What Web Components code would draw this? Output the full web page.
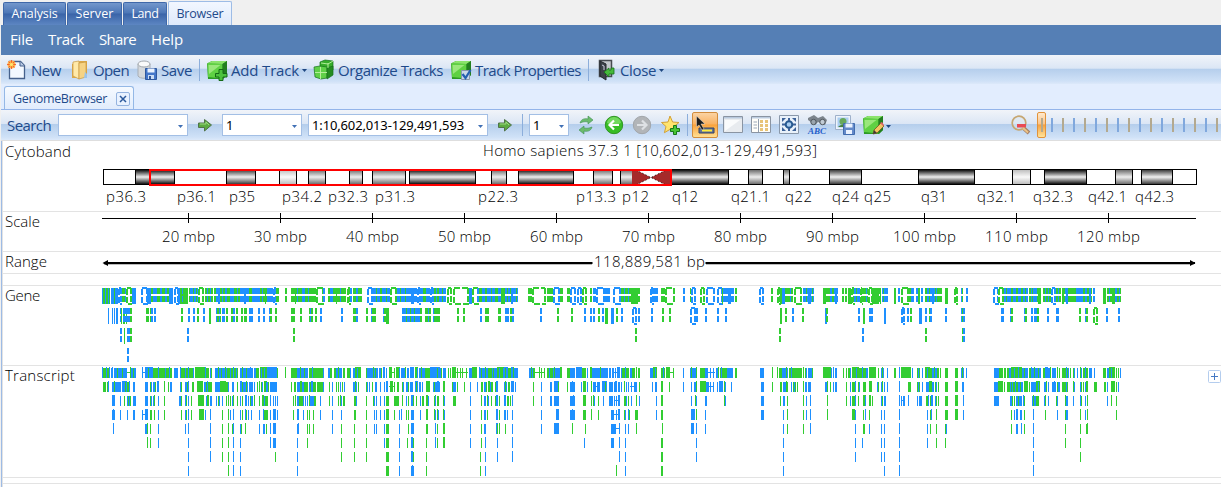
<!DOCTYPE html>
<html lang="en">
<head>
<meta charset="utf-8">
<title>Genome Browser</title>
<style>
html,body{margin:0;height:100%;overflow:hidden;background:#f0f0f0}
body{font:15px "Open Sans","Noto Sans",sans-serif;color:#1e4a8a}
</style>
</head>
<body>
<genome-app></genome-app>
<script>
const define=(name,cls)=>customElements.define(name,cls);
const shadow=(el,html)=>{const r=el.attachShadow({mode:'open'});const t=document.createElement('template');t.innerHTML=html;r.append(t.content.cloneNode(true));return r;};

/* Text tracked out to a fixed width */
class FitText extends HTMLElement{
  connectedCallback(){
    if(this.shadowRoot)return;
    const r=shadow(this,`<style>:host{display:block;flex:none;white-space:pre}span{display:inline-block}</style><span><slot></slot></span>`);
    const w=+this.getAttribute('w'),s=r.querySelector('span');
    this.style.width=w+'px';
    if(this.hasAttribute('gap'))this.style.marginLeft=this.getAttribute('gap')+'px';
    const n=this.textContent.length;
    s.style.letterSpacing=((w-s.getBoundingClientRect().width)/n)+'px';
  }
}
define('fit-text',FitText);

const GLYPHS={
 new:`<path d="M2.500 1.500h11l4 4v13h-15z" fill="#f3f8ff" stroke="#46618c" stroke-width="1.300"/><path d="M13 1.500v4.500h4.500" fill="#b9cbe6" stroke="#46618c"/><circle cx="4.500" cy="4.500" r="4" fill="#ffb347"/><path d="M4.500 0v9M0 4.500h9M1.500 1.500l6 6M7.500 1.500l-6 6" stroke="#f4592d" stroke-width=".9"/><circle cx="4.500" cy="4.500" r="1.700" fill="#ffe66a"/>`,
 open:`<path d="M2 4l8-3h7v15l-8 2H2z" fill="#dca94a"/><path d="M3 2l6-1v18l-6-3z" fill="#ffe9a8" stroke="#c79a45" stroke-width=".7"/><path d="M9 3l7-1v15l-7 2z" fill="#f6d384" stroke="#c99a41" stroke-width=".7"/><path d="M15 12l2 2v4h-3z" fill="#9cc4ea"/>`,
 save:`<path d="M1 4v12c2 3 10 3 12 0V4" fill="#d4d8dc" stroke="#a8aeb5"/><ellipse cx="7" cy="4" rx="6" ry="3" fill="#fafafa" stroke="#a3a8ad"/><path d="M8.500 8.500h11v11h-11z" fill="#4376c9" stroke="#2e579d"/><path d="M10.500 8.500h7v4h-7z" fill="#e9f2ff"/><path d="M11 15h6v4h-6z" fill="#c9dcf5"/><path d="M12 16h2v3h-2z" fill="#32589b"/>`,
 cube:`<path d="M0 3.500L5 1h15v14l-4 4H1z" fill="#2c9a24"/><path d="M0 3.500L5 1h15l-4.500 3z" fill="#8be36b"/><path d="M.5 3.500L15.500 4v14.500L1 17z" fill="#5fd143"/><path d="M15.500 4L20 1v14l-4.500 4z" fill="#237f1f"/><path d="M1.500 5h12L2 14z" fill="#a9ec8b" opacity=".8"/>`,
 add:`<use href="#c"/><path d="M12 9.500h4v4h4v3.500h-4v3.500h-4v-3.500H8.500v-3.500H12z" fill="#4cc23c" stroke="#146a16"/>`,
 organize:`<path d="M6 2l5-2 8 1v9l-5 3H6z" fill="#37ad2b" stroke="#14711a" stroke-width=".7"/><path d="M0 7l6-1 7 1v11l-6 1-6-2z" fill="#5fd048" stroke="#14711a" stroke-width=".7"/><path d="M13 8l6-2v9l-6 4z" fill="#248c21" stroke="#14711a" stroke-width=".7"/><path d="M6.500 7v12M1 12.500h12M14 3v5M7 3l7 1 5-3" stroke="#bdf2a5" stroke-width=".9" fill="none"/>`,
 props:`<use href="#c"/><path d="M10.500 10.500h8v9h-8z" fill="#c9d8e8" stroke="#8997ab"/><path d="M11.500 14l3 4 5-8" stroke="#2460b0" stroke-width="2.200" fill="none"/>`,
 close:`<path d="M2.500.5h12v16h-12z" fill="#c3c7cb" stroke="#474b50" stroke-width="1.500"/><path d="M3 1l6 3v16l-6-4z" fill="#3c4248" stroke="#24282c"/><path d="M5 5l2 1v4" stroke="#ccd" fill="none"/><path d="M17 8v6h-5v3l-5-5 5-4v2h2V8z" fill="#45b83b" stroke="#157218" stroke-width=".8"/>`,
 go:`<path d="M3.500 8h6V4.500l7 5.500-7 6V12.500h-6z" fill="#5dab42" stroke="#50724a" stroke-width="1"/><path d="M5 9h6V7l3 3" fill="none" stroke="#9bd980"/>`,
 refresh:`<path d="M4 8c1-4 5-5 8-4V1l5 4-5 4V7c-3-.5-5-.3-8 1zM16 12c-1 4-5 5-8 4v3l-5-4 5-4v2c3 .5 5 .3 8-1z" fill="#6cbb6c" stroke="#3c8e50" stroke-width=".6"/>`,
 back:`<circle cx="10" cy="10" r="8.700" fill="#38bd26" stroke="#319523"/><path d="M3 8a7 6 0 0 1 14 0c-5 2-9 2-14 0" fill="#8be475" opacity=".7"/><path d="M15 10H6M10 5.500L5.500 10l4.500 4.500" fill="none" stroke="#fff" stroke-width="2.200"/>`,
 fwd:`<circle cx="10" cy="10" r="8.700" fill="#b2b5b8" stroke="#a2a6aa"/><path d="M5 10h9M10 5.500l4.500 4.500-4.500 4.500" fill="none" stroke="#dee1e4" stroke-width="2.200"/>`,
 star:`<path d="M9 1l2.600 6 6.400.5-5 4 1.600 6.200L9 14.400l-5.600 3.300L5 11.500l-4.500-4L7 7z" fill="#ffe46e" stroke="#d3a137"/><path d="M12.500 10.500h3v3h3v3h-3v3h-3v-3h-3v-3h3z" fill="#48c634" stroke="#157719"/>`,
 select:`<path d="M4 13v5h15v-5z" fill="#62739a" stroke="#324265"/><path d="M7 14.500h10v2H7z" fill="#ffed3e"/><path d="M1.500 1v11l2.500-2 3 5 2-1-3-5h4z" fill="#1d1d1d" stroke="#ece5db" stroke-width=".5"/>`,
 window:`<path d="M.5 1.500h19v16H.5z" fill="#e8ebef" stroke="#8a94a2"/><path d="M1 2h18v1.500H1z" fill="#b8c8dd"/><path d="M2 16L17 5H2z" fill="#fafbfc"/>`,
 list:`<path d="M.5 1.500h19v16H.5z" fill="#fffefa" stroke="#8a94a2"/><path d="M1 2h18v1.500H1z" fill="#bccce0"/><path d="M7.500 4v13" stroke="#919eaf"/><path d="M2.500 7H6M2.500 10H6M2.500 13H6" stroke="#9aa7b9"/><path d="M9 5h3v3H9zm5 0h3v3h-3zM9 9h3v3H9zm5 0h3v3h-3zM9 13h3v3H9zm5 0h3v3h-3z" fill="#e8c476"/>`,
 fit:`<path d="M.5.500h19v18H.5z" fill="#e9f1fa" stroke="#8a98aa"/><path d="M3 3h4L3 7zm10 0h4v4zM3 12v4h4zm14 0v4h-4z" fill="#3d6298"/><circle cx="10" cy="9.500" r="3.300" fill="#a9cdf0" stroke="#285a90" stroke-width="2"/><path d="M10 3v3M10 13v3M3 9.500h3M14 9.500h3" stroke="#3d6298" stroke-width="2"/>`,
 find:`<path d="M1 3l6-3 4 3 5-2 4 4-2 5-7-3-3 3-7-5z" fill="#7c848c"/><circle cx="6.500" cy="7" r="2.700" fill="#9ba5ad" stroke="#4e565d"/><circle cx="15.500" cy="7" r="2.700" fill="#c2ccd5" stroke="#4e565d"/><text x="10" y="19" text-anchor="middle" font-family="Liberation Serif,serif" font-size="9" font-style="italic" font-weight="bold" fill="#2560cb">ABC</text>`,
 picture:`<path d="M.5.500h15v14H.5z" fill="#eef4fb" stroke="#9eb0ca"/><path d="M2.500 2.500h11v10h-11z" fill="#a9cdf0"/><circle cx="8" cy="6.500" r="3.500" fill="#68a95c"/><path d="M3 12c3-3 7-3 10 0z" fill="#45823c"/><path d="M8.500 8.500h11v11h-11z" fill="#6389c9" stroke="#416cae"/><path d="M10.500 8.500h7v4h-7zM11 15h6v4h-6z" fill="#eaf2ff"/>`,
 edit:`<use href="#c"/><path d="M10 19l1-4 7-7 3 3-7 7z" fill="#f2c562" stroke="#74551f" stroke-width=".8"/><path d="M10 19l1-4 3 3z" fill="#403b35"/><path d="M17 8l2-1 2 3-1 1z" fill="#df6666"/>`,
 zoomout:`<circle cx="8" cy="8" r="6.800" fill="#dce7f0" fill-opacity=".55" stroke="#c6a772" stroke-width="1.700"/><path d="M6 9h9v3.500H6z" fill="#e84b55"/><path d="M13 13.500l5 4.500" stroke="#a5826a" stroke-width="4"/><path d="M12 13l5 4.500" stroke="#edc386" stroke-width="2"/>`
};
class UiIcon extends HTMLElement{
  connectedCallback(){
    if(this.shadowRoot)return;
    const g=GLYPHS[this.getAttribute('name')].replace('<use href="#c"/>',GLYPHS.cube);
    shadow(this,`<style>:host{display:block;flex:none;width:20px;height:20px;margin-left:${this.getAttribute('gap')||0}px}svg{display:block;overflow:visible}</style><svg width="20" height="20" viewBox="0 0 20 20">${g}</svg>`);
  }
}
define('ui-icon',UiIcon);

class UiCaret extends HTMLElement{
  connectedCallback(){
    if(this.shadowRoot)return;
    shadow(this,`<style>:host{display:block;flex:none;width:5px;height:3px;margin-top:2px;margin-left:${this.getAttribute('gap')||0}px}svg{display:block}</style><svg width="5" height="3"><path d="M0 0h5L2.500 3z" fill="${this.getAttribute('tone')||'#1e4680'}"/></svg>`);
  }
}
define('ui-caret',UiCaret);

class UiRule extends HTMLElement{
  connectedCallback(){
    if(this.shadowRoot)return;
    shadow(this,`<style>:host{display:block;flex:none;width:1px;height:22px;background:#8caedb;margin-left:${this.getAttribute('gap')}px}</style>`);
  }
}
define('ui-rule',UiRule);

class UiCombo extends HTMLElement{
  connectedCallback(){
    if(this.shadowRoot)return;
    shadow(this,`<style>:host{box-sizing:border-box;display:flex;flex:none;align-items:center;justify-content:space-between;height:22px;width:${this.getAttribute('w')}px;margin-left:${this.getAttribute('gap')}px;padding:0 4px 0 3px;background:#fff;border:1px solid #a3bfe5;color:#000;font:13px "Noto Sans","Open Sans",sans-serif}</style><div><slot></slot></div><ui-caret tone="#4070b5"></ui-caret>`);
  }
}
define('ui-combo',UiCombo);

class TopTab extends HTMLElement{
  connectedCallback(){
    if(this.shadowRoot)return;
    shadow(this,`<style>:host{box-sizing:border-box;display:flex;justify-content:center;align-items:center;height:23px;width:${this.getAttribute('w')}px;margin-right:1px;border:1px solid #3f68a9;border-bottom:0;border-radius:2px 2px 0 0;background:linear-gradient(#7397cc,#4d77b7 45%,#3a64a8 50%,#5d86c2);color:#fff;font-size:12.500px;padding-bottom:1px}
    :host([active]){height:24px;border-color:#9dbce6;background:linear-gradient(#f2f7ff,#dfeafb);color:#1e4a8a}</style><slot></slot>`);
  }
}
define('top-tab',TopTab);

class ToolBar extends HTMLElement{
  constructor(){super();shadow(this,`<style>:host{box-sizing:border-box;display:flex;align-items:center;background:linear-gradient(#f1f4f9,#dbe6f5 46%,#b5ceec 48%,#cfe1f7 90%,#dce9fa)}</style><slot></slot>`);}
}
define('tool-bar',ToolBar);

class ZoomSlider extends HTMLElement{
  connectedCallback(){
    if(this.shadowRoot)return;
    let s='';for(let i=1;i<17;i++)s+=`<i class="${i%2?'b':''}"></i>`;
    shadow(this,`<style>:host{display:flex;align-items:center;flex:none;margin-left:6px;height:26px}
    b{box-sizing:border-box;display:flex;align-items:center;justify-content:center;width:9px;height:26px;border:1px solid #e2933a;border-radius:2px;background:linear-gradient(#ffe9cc,#fbc58a 45%,#f5a142 50%,#ffe39a);margin-right:5px}
    b i{margin:0}i{width:2px;height:14px;margin-right:9px;background:#b3a98f}i.b{background:#80a8dd}</style><b><i></i></b>${s}`);
  }
}
define('zoom-slider',ZoomSlider);

/* A track row: caption column and plot */
class TrackRow extends HTMLElement{
  connectedCallback(){
    if(this.shadowRoot)return;
    shadow(this,`<style>:host{box-sizing:border-box;display:flex;height:${this.getAttribute('h')}px;border-bottom:1px solid #e3e3e3;background:#fff;color:#000;position:relative;font-weight:350}
    .cap{width:98px;flex:none;padding-left:2px;box-sizing:border-box;line-height:${this.getAttribute('line')||18}px}::slotted(*){flex:none}</style>
    <div class="cap">${this.getAttribute('name')?`<fit-text w="${this.getAttribute('cw')}">${this.getAttribute('name')}</fit-text>`:''}</div><slot></slot>`);
  }
}
define('track-row',TrackRow);

const svgBox=(h,top,body)=>`<style>:host{display:block;width:1120px}svg{display:block}text{font:350 15px "Open Sans","Noto Sans",sans-serif;fill:#000}</style><svg width="1120" height="${h}" viewBox="101 ${top} 1120 ${h}">${body}</svg>`;
const label=(s,x,y,w)=>`<text x="${x}" y="${y}" textLength="${w}">${s}</text>`;

class CytobandPlot extends HTMLElement{
  constructor(){
    super();
    const grads=[['k','#000','#eee'],['d','#303030','#f0f0f0'],['m','#666','#eee'],['l','#bbb','#fafafa']];
    let s='<defs>'+grads.map(([i,a,b])=>`<linearGradient id="${i}" x2="0" y2="1"><stop stop-color="${a}"/><stop offset=".5" stop-color="${b}"/><stop offset="1" stop-color="${a}"/></linearGradient>`).join('')+'</defs>';
    s+='<rect x="103.500" y="169.500" width="1093" height="15" fill="#fff" stroke="#000"/>';
    const bands='k135-174 d226-255 l279-296 m308-325 m349-362 m372-405 k409-475 m491-506 k518-573 m593-612 m620-633 k670-728 m748-762 m783-789 d829-861 k918-974 l1012-1030 k1044-1086 m1115-1132 d1141-1172';
    for(const b of bands.split(' ')){const [x,e]=b.slice(1).split('-').map(Number);s+=`<rect x="${x+.5}" y="169.500" width="${e-x}" height="15" fill="url(#${b[0]})" stroke="#000"/>`;}
    s+='<rect x="632" y="170" width="38" height="15" fill="#fff"/><path d="M632 170h4L651 177.500 636 185h-4zM670 170h-4L651 177.500 666 185h4z" fill="#a52a2a"/><path d="M636 170L666 185M636 185L666 170" stroke="#000" stroke-dasharray="1.500 2" stroke-width=".7"/><rect x="150" y="170" width="521" height="15" fill="none" stroke="#f00" stroke-width="2"/>';
    s+=label('Homo sapiens 37.3 1 [10,602,013-129,491,593]',483,156,334);
    for(const [n,x,w] of [['p36.3',106,40],['p36.1',177,39],['p35',229,26],['p34.2',282,40],['p32.3',328,40],['p31.3',375,40],['p22.3',478,40],['p13.3',576,40],['p12',622,27],['q12',672,26],['q21.1',731,39],['q22',785,27],['q24',832,27],['q25',864,27],['q31',921,26],['q32.1',977,39],['q32.3',1033,40],['q42.1',1088,39],['q42.3',1135,39]])s+=label(n,x,202,w);
    shadow(this,svgBox(70,141,s));
  }
}
define('cytoband-plot',CytobandPlot);

class ScalePlot extends HTMLElement{
  constructor(){
    super();
    let s='<path d="M102 218.500H1196" stroke="#000"/>';
    for(let i=0;i<11;i++){const x=188+92*i,w=i<8?53:63;s+=`<path d="M${x+.5} 213V223" stroke="#000"/>`+label((20+10*i)+' mbp',x+.5-w/2,242,w);}
    shadow(this,svgBox(39,212,s));
  }
}
define('scale-plot',ScalePlot);

class RangePlot extends HTMLElement{
  constructor(){
    super();
    shadow(this,svgBox(21,252,'<path d="M104 264.500H592M706 264.500H1194" stroke="#bbb"/><path d="M104 263H592.500M705.500 263H1195" stroke="#000" stroke-width="2"/><path d="M102.500 263l5.500-3v6zM1195.500 263l-5.500-3v6z"/>'+label('118,889,581 bp',594,267,111)));
  }
}
define('range-plot',RangePlot);

/* Features are packed as tokens per row and per tile; coordinates are thirds of a pixel. */
const BLUE='#1e90ff',GREEN='#32cd32',TILES=[90,430,770];
const GENES=[
["G36-60 B36 B45 B54 B63-84 G72 q84-96 g96-108 b105 r108-126 B126-138 q153-175 B171-183 g183-240 b189-201 b210-216 b225-231 B237-249 q252-267 B264-273 G270-294 b276 g297-303 b300-324 g309 g318 r324-342 g345-369 b351 b360 g372-530 b378-390 b396 b405-411 b420-432 b441 b450-462 b468-477 b486-510 b516 B384-390 B462-468 G525 b531-558 q549-561 g558-567 g585-591 g603-678 b621 b636-645 b654 G615 r678-702 b699-705 g714-768 b720-729 b738 b750 G738 r771-783 b780-786 g789-816 b798-804 q831-849 b849-900 g858 g870-876 g888 r900-921 b921-1050 g930 g945 g999-1008 g1035 B963-972 q981-993 q1020-1032",
"q0-12 b9-48 g12-18 g21-27 g36 r51-66 r69-117 B117-126 r126-147 b141-240 g147-156 g165-171 g183 g195-204 G213-225 g231 g240-246 B243-249 b249-264 g258 g294-306 r306-348 g351-369 q369-390 g390-399 g411-420 q420-438 q441-456 r456-471 g480-486 b489-501 q498-525 b525-540 q549-573 g573-603 b582 b594 G603-624 g624-630 q660-672 b672-684 g693-705 r705-735 b759-765 g780 q783-798 r810-825 q828-855 q861-879 G876 b879-912 B894-903 g915-921 q987-1002 g1023-1029 g1041-1047",
"g3-9 r21-33 G30-36 B36-45 g45-69 b60 r72-96 b99-132 g108 g126 B114-123 G159-168 g168-204 b180-186 b192-204 B195-201 g216-222 g225-231 G234-246 r243-255 b252-270 g258 r270-279 g279-294 b288 r294-309 G306-327 g327-333 G330 b336-354 g339 G372-378 b384-390 r393-417 g417-423 b423-432 b438-444 G444-450 b453-459 g465-516 b471-501 g477 B486-492 g495 G525-534 r552-564 b573-579 g576 b588-594 q669-687 r684-702 b702-774 g708 g723-729 g738-744 g753-759 g765 g777-813 b783 b789-801 G804-813 g819-843 b825 b834 q843-858 g858-873 b864 g876-966 G876-882 b885-894 B888-894 b918-939 b945-951 B957-963 b969-975 G999-1008 g1011-1053 b1017 G1026-1035 b1035-1041 b1047"],
["B54 B66 B72 B78-84 b90-96 G93 G99-105 G108 b99-120 g120-126 g168-177 g180 b183-189 b192-198 g273-279 b294-300 b309-315 g321-327 b339-345 G357-363 b378 g381-387 b387 g390 b396-405 g408-414 g423-429 b429-435 g438-444 g453-459 g462-471 b477-489 b504-510 b519-525 b537 g540-546 g555-561 g603-615 g630-636 g657 b660 g663-669 g675-681 b690-696 b753-759 g789-798 b798-804 g828-834 b843 g846-858 b879 g882-888 G888-897 b936-990 g948 g960 g972 g990-996 g1005-1023 b1014 b1029 g1032-1050",
"g0 b9 g12-30 g81-87 g99-105 b150-156 g165-177 g204-213 b225-237 g240-246 b246-252 b330-336 g381-387 g423-429 b462-468 b480-486 b489-495 g504-510 b516-522 G525-534 B543-552 g558-564 b573-579 q606-621 b624-630 b663-669 g696-702 g717-723 q780-798 b798-804 b825-831 b861-867 b885-891",
"G30-36 g45-51 b66-72 g96-102 B165-171 g168-174 b264-270 G279-285 b297-309 B342-348 q393-405 b411-417 g420-426 B447-456 b465-471 g477 b480-486 b525-531 b573-579 g576 b579-585 b693-702 b720 g723-729 b762 g765-771 b783-789 b792-801 g801-807 b831-837 b858-867 g927-933 b945 g948-954 r969-984 b1008-1014 b1044-1050"],
["b90-96 G102 b111-120 g120-126 b291-297 g609-615","g615-621 g1047-1050","g27-33 b276-282 g465-471 g576 b579-585"],
["b111-117","",""]
];
const TRANSCRIPTS=[
["g36-60 B36 B48 B57 b63-69 B66 b72-111 g81 g96 x111-123 G120 b123-138 g129 B157 y157-166 B165-190 g174 g190-246 B205 b225 B237 b252-264 B270 g273-312 b285 B294 b309 G315-345 g348-357 B345 g360-366 b360 b375-411 G384 g393 G405 g411-444 b420 B429 b438 b450-489 G456 g468 B480 b492-501 g498 g501-507 G510-531 b513 b522 B531-561 g561 G585 g603-621 b621-654 G630 g642 g657-702 B666 b699 b714-720 g720-726 g732-738 b738-756 G744 g759-765 g771-783 b780 b789-795 G795-813 b801 g828 b831-849 G849 b852-864 g855 b867-873 g873 B879-885 b888 x897-915 G897-906 g912 G918-930 b927 b933-945 G945 b951-957 B960-972 G975-984 b981 b987-1005 G993 g1005-1020 b1020-1050 g1017",
"B0-30 g21 b30-36 g33 b39-48 g54 g60 G66-78 g81 x78-114 g90 g96 g108 b117-127 G127-142 B147 b150-174 g153 G165 g174-186 b186-201 g189 G201-222 b207 b219 B222-234 g225 g234-243 B243-249 b249-264 G249 b297-309 G303 g309-315 x315-342 G327 g333 g342 g351-369 b357 b369-390 G372 G390-396 g411-420 b420-435 g414 B438-456 g456-468 b471 G480-486 b486-510 y489-510 b513-534 G510 b537-543 b546-552 y552-570 b555 B561-570 b573 g576-597 B585 b600-606 g606-615 G618 g624 g627 b660-672 G669-681 b675 g693-705 B699 G708-720 x720-732 g729 b759 b780-798 G783 G798 g810-825 b825-834 y834-855 b840 b849 b858-867 G864 g870-891 B873 b891-909 g915-921 b990-1002 G1026 G1041 g1047",
"g6 G21 g27-36 b36-54 G48 g57-96 B63 b99 G99 g105-111 b108 b114-126 g126 G159-183 b183 B189 b195-201 g219 g228 g234-240 b240 G246-267 b258 g267-291 B276 b288 b291 G297-318 g324 b333-342 G336 b351 g372-378 B387 G393-423 b426 g441-450 b444 b456 G465-480 b471 g480-486 b486-501 G492 g501-507 g510 g525-534 g555-564 b573 G576 b579 b588 b672-687 g687-699 g702-708 g711-720 b717-726 G723-756 b732 B744 b756-774 g762 g777-783 B783 b786-798 G792 b798-813 g804 g819-825 B825-834 b834-843 G840 b846-858 G861 g867 g876-894 B888 b894 g900 g909 b912 b921 G930 b933 g939-954 B945 b957-966 b972 g999-1008 b1011-1017 G1017-1035 b1023 g1038 g1044 b1050"],
["g39-48 g51 B54 b66-72 G72 b75-93 B96-111 g105 g111-117 B117 b129-135 b165-174 g180 b183 b189-195 g195 B201-207 G222 g234 b240-246 b270 g273 b285-291 g291-297 B294 g306-312 G321-339 b342-348 g348-360 B351 g360-366 b375-390 G390-408 g408-417 b414 b426-432 g441 B450-456 g456 b459-474 G468 b477-489 b492 g501 G507 g513-519 b516 G522-531 b528 b540-561 b531 g534 g603 g612-618 b621-630 G630-636 b636-642 g642-654 b657 B663-669 g660 g669-678 g681-699 b699 g717 b726 g738 g744 b750 g756 b762 b789-795 G795 b798 g804 g828 b831 b837 g846 b855-861 b870 b882 B888-894 x897-915 G900-909 g912 g921-927 g936-942 b939 b948-954 g954 b960-969 B975-984 g978 b987-993 b996 G1008-1020 b1029-1035 g1035-1041 B1041-1047",
"b9 g12 b15-30 G39-45 g66-72 b69-78 g81 g102 b120 b141 g153-159 b162-168 g168 G174-180 b180 g183-189 g195 B198-204 b222 G225 b228 g234-240 B243-252 b255 g309 b333 b360-366 B372-387 g384 g411 b420-435 B426 b453 G459-468 b471 G483 b489-498 y489-510 b501-510 B516-531 g525 b537-549 b552 B555-561 b564-570 b573 G582 b588 b594 y600-615 b603 b612-621 g627 b666 b675-681 G693-699 g717 b759 b783 b792-798 G798 G810-828 b828-837 y834-852 b840 b849 b861 B867-879 G882 b885 b903 b993-1002 g1026",
"g6 g30-36 b39-48 G48 g51 b63 g69-78 b72 g81 G99 b105-111 b114-123 b165-171 G171 g180 b189 b195-201 g228 b240 g246-255 B255 g264 b267 g279-288 G297-306 b321 g324 b333 G336 b342 b351 B387 g414-423 g441-450 b444 b456 b468-477 G477-486 b486-492 g495 b498 g504 g525-534 G555-564 b576-582 b672-684 G684-699 g702 g711-726 b720 b726 g729-744 B735 b744-759 g750 G762-774 g777 b783 b786-798 G798-810 b804 b822-828 G828 b834 b846-858 B852 g861-867 b864 b867 g876-888 b888 g891 G909 b912 b930 g933 g939 b945 G948-954 g972-981 g1002-1008 b1011 G1023-1035 g1038 b1044"],
["B66-75 b90 g102 b111 g114-120 b117 g120 b129-138 b165-174 g180 b183 b189 G192 b204 g222 b267-273 g273 B285-291 g288 b294 g303 G324-342 b348 G351-357 b360-366 b378 g384 b387 b396 g408 G414 g420 b426-432 G429 g441 b450 g456 B465-471 b474 g480 b483-489 G492 g507 G516-522 b522 g525-534 B540 b549 b555 b561 g609 G615 b621-627 g627-639 b639 b645 b651 G657 b660-672 g672 g675 b690 g717 b726 g744 G750 b753 g759-765 g792-798 b798 g828 g849 b852 b858 b870 b882 g888-897 g912-927 G936 b948 g954 B963-972 g969 g978 b990 g996-1002 G1008-1014 b1014 b1032 G1035 b1041",
"g12 b15 g21 g24 G39 b42 g69-78 b120 G153 b162-168 G171 b174 g183 g195 B198-204 g207 B222-228 g231-237 g240 B246 g309 b333 b360-366 b372-387 b420-435 B429 G459-468 g483 G489 b492 g504 b519 b537-549 b552 y552-570 b558 B564-570 g582-588 b588 g594 b603 G618 b627 b678 G693-699 b783 G795 b798 b825-831 G882 b885 b993-1002",
"g30 b39-45 g51 G99 b108 B120 G171 g228 b240 g246-255 B255 g264 G279-288 b285 G297-303 g306 b333 g336 b342-348 B387 b393 y393-405 b399-405 B414 b441 b447-456 g468-474 B474 g480 B483-489 b495 g498 g504 g525-534 G555-564 B579 b672-687 b720-726 g726 g732 b738-744 g744 b747-756 B759 g762 b786-798 G789 g798 g801-807 b822 G825 b834 g858 b861 G885 b888-894 b909 B930 g933 b945 G951 b1011 G1023 g1038"],
["b66-75 B69 b90 b111 b129-135 b157 y157-166 B165-174 g180-186 g192 b204 g222 g273 b285-291 g288 B294 g303 G327-342 b345 B360 g396 G414 b420 B429 b450 g456 B465 g468 b474 b483 b507 B519 g522-534 b540 B549-558 b561 g609 B621-627 b639 g651 g657 g669 b690 b726 b753 g792-798 g828 b852 b858 b870 b882 G888-897 g912 b927 B933 g948 g954 b963-972 b990 G1008-1014 b1032 g1035 G1041",
"G12 b15 g21 b24 G39 b42 b120 g153 b162-168 g171 B198-204 g207 b222-228 b231 b246 b333 B378-387 b420-435 B426 g459-468 G483 g504 b543-552 b558 y552-570 B564-570 g582 b585 B594 g597 g615-624 b678 g693-699 B783-795 G798 b825 b993-1002",
"b39 G51 g99 b108 B120 G171 G246-255 b255 g279 B285 g297 b333 b342 B387 b471 g480 B483 G498 g525-534 G555-564 b579 g723 b732 B738-744 b750-756 g762 B789 g825 b861 g885 b888-894 G930 b945 G951 g1038"],
["B69 b165-171 G171 g180 b204 b285 B294 B360 g396 G414 g426 B429 b450 g453 G465 b507 b519-525 g528 B540 B549-558 b621-627 B624 g651 g657 g669 b726 g753 g792 g828 b852 b858 b882 g888-897 b927 g954 B963-972 g1008-1014 B1035 g1041","B15 g21 G39-45 b120 g153 b162-168 B198-204 g201 G207 g225 b246 b333 B372-387 G426 g465 b543-558 y558-570 B567 b585 b594 G618 G696 B783-792 B798 b825","b39 g51 g99 B120 b255 g279-285 b297 b333 b342 B387 b471 g480 g498 g525 b528 g723 b738-744 B753 g762 B789 g885 g930 g948-954 G951"],
["G171 g180 b204 b294 B360 g396 G414 B429 b450 B540 b549-558 b621 g651 g753 g792 g828 b882 g888-897 b927 g951 B963-969 g969 g1008 B1035 g1041","B15 g21 G39-45 b120 g153 B165 b201 B246 b462 b543-552 B567 b585 g693-699 b798","b39 b255 b276 b333 b342 B387 b471 g498 g525 B789 g885 g930"],
["b294 B360 g396 g414 B429 b450 g555 b621 g753 g792 g828 g888-897 b927 B963-969 g969 g1008","g150 b165 b201 B246 B567 b585 g693-699 b798","b39 b255 b333 b342 B387 B789 g930"],
["b294 G414 B429 b450 b621 g888-897 b927 b963-972 B966 g1008","g150 b165 G558 b585 g693-699","b39 b342 B387 B789"]
];
const rect=(x,y,w,h,f)=>`<rect x="${x}" y="${y}" width="${w}" height="${h}" fill="${f}"/>`;
function paint(rows,y0,pitch,draw){
  let s='';
  rows.forEach((tiles,r)=>tiles.forEach((t,i)=>{
    for(const tok of t.split(' ')){
      if(!tok)continue;
      const [a,b]=tok.slice(1).split('-').map(Number);
      const x=TILES[i]+Math.round(a/3),e=b?TILES[i]+Math.round(b/3):x+1;
      s+=draw(tok[0],x,y0+r*pitch,e-x);
    }
  }));
  return s;
}
class GenePlot extends HTMLElement{
  constructor(){
    super();
    const s=paint(GENES,288,20,(k,x,y,w)=>{
      if(k=='g'||k=='b'){const c=k=='g'?GREEN:BLUE;return rect(x,y,w,6,c)+rect(x,y+8,w,6,c);}
      if(k=='G'||k=='B')return rect(x,y,w,16,k=='G'?GREEN:BLUE);
      const c=k=='r'?GREEN:BLUE;
      return rect(x,y,w,15,'#fff')+`<path d="M${x+1} ${y+1}V${y+16}M${x+w-1} ${y+14}V${y}" stroke="${c}" stroke-width="2" stroke-dasharray="6 2"/><path d="M${x+1} ${y}H${x+w-1}M${x+2} ${y+16}H${x+w}" stroke="${c}" stroke-width="2" stroke-dasharray="6 2"/>`;
    });
    shadow(this,svgBox(79,286,s));
  }
}
define('gene-plot',GenePlot);
class TranscriptPlot extends HTMLElement{
  constructor(){
    super();
    const s=paint(TRANSCRIPTS,368,14,(k,x,y,w)=>{
      const c='gGx'.includes(k)?GREEN:BLUE;
      if(k=='x'||k=='y')return rect(x,y+4,w,1,c);
      const up=k<'a'?1:0;return rect(x,y-up,w,10+up,c);
    });
    shadow(this,svgBox(111,366,s));
  }
}
define('transcript-plot',TranscriptPlot);

class GenomeApp extends HTMLElement{
  connectedCallback(){
    if(this.shadowRoot)return;
    shadow(this,`<style>
    :host{display:flex;flex-direction:column;width:1221px;height:487px}
    .tabs{display:flex;align-items:flex-end;height:25px;padding-left:3px;box-sizing:border-box}
    .body{display:flex;flex-direction:column;flex:1;margin-left:1px;min-height:0}
    .menu{display:flex;align-items:center;height:30px;background:#557fb5;color:#fff;padding-left:9px;line-height:18px}
    .menu fit-text{margin-top:-2px}
    .main{height:29px;padding-left:6px}
    .docs{display:flex;align-items:flex-end;height:25px;background:#e2edfe;padding-left:3px;box-sizing:border-box}
    .doc{display:flex;align-items:center;box-sizing:border-box;width:130px;height:23px;border:1px solid #94b8e6;border-bottom:0;border-radius:3px 3px 0 0;background:linear-gradient(#f6faff,#e1ecfc);padding-left:8px;font-size:12.500px}
    .x{box-sizing:border-box;display:flex;width:14px;height:14px;margin:1px 0 0 9px;border:1px solid #94b3df;border-radius:2px;background:#e9f2ff;align-items:center;justify-content:center}
    .nav{height:32px;border-top:1px solid #93b4ea;border-bottom:1px solid #dedede;padding-left:6px}
    .on{box-sizing:border-box;flex:none;width:26px;height:26px;margin-left:4px;border:1px solid #d18c3d;border-radius:2px;background:linear-gradient(#fbd3a3,#fab364 45%,#fba33c 50%,#ffdf93);display:flex;align-items:center;justify-content:center}
    .tracks{flex:1;border-left:1px solid #9dbbe5;padding-left:1px;background:#e3e3e3;display:flex;flex-direction:column}
    .more{position:absolute;left:1205px;top:4px;width:13px;height:13px}
    .rest{flex:1;background:#fff}
    </style>
    <div class="tabs"><top-tab w="63"><fit-text w="46">Analysis</fit-text></top-tab><top-tab w="55"><fit-text w="38">Server</fit-text></top-tab><top-tab w="44"><fit-text w="27">Land</fit-text></top-tab><top-tab w="64" active><fit-text w="47">Browser</fit-text></top-tab></div>
    <div class="body">
    <div class="menu"><fit-text w="23">File</fit-text><fit-text gap="15" w="36">Track</fit-text><fit-text gap="15" w="37">Share</fit-text><fit-text gap="15" w="32">Help</fit-text></div>
    <tool-bar class="main"><ui-icon name="new"></ui-icon><fit-text gap="4" w="30">New</fit-text><ui-icon name="open" gap="9"></ui-icon><fit-text gap="3" w="36">Open</fit-text><ui-icon name="save" gap="8"></ui-icon><fit-text gap="4" w="31">Save</fit-text><ui-rule gap="7"></ui-rule><ui-icon name="add" gap="7"></ui-icon><fit-text gap="4" w="68">Add Track</fit-text><ui-caret gap="3"></ui-caret><ui-icon name="organize" gap="7"></ui-icon><fit-text gap="4" w="105">Organize Tracks</fit-text><ui-icon name="props" gap="8"></ui-icon><fit-text gap="4" w="106">Track Properties</fit-text><ui-rule gap="7"></ui-rule><ui-icon name="close" gap="8"></ui-icon><fit-text gap="3" w="36">Close</fit-text><ui-caret gap="3"></ui-caret></tool-bar>
    <div class="docs"><div class="doc"><fit-text w="94">GenomeBrowser</fit-text><div class="x"><svg width="8" height="8"><path d="M1 1l6 6M7 1L1 7" stroke="#2c5a9c" stroke-width="1.500"/></svg></div></div></div>
    <tool-bar class="nav"><fit-text w="44">Search</fit-text><ui-combo gap="7" w="130"></ui-combo><ui-icon name="go" gap="7"></ui-icon><ui-combo gap="7" w="80">1</ui-combo><ui-combo gap="6" w="180"><fit-text w="152">1:10,602,013-129,491,593</fit-text></ui-combo><ui-icon name="go" gap="7"></ui-icon><ui-rule gap="7"></ui-rule><ui-combo gap="6" w="40">1</ui-combo><ui-icon name="refresh" gap="7"></ui-icon><ui-icon name="back" gap="8"></ui-icon><ui-icon name="fwd" gap="8"></ui-icon><ui-icon name="star" gap="9"></ui-icon><ui-rule gap="6"></ui-rule><div class="on"><ui-icon name="select"></ui-icon></div><ui-icon name="window" gap="5"></ui-icon><ui-icon name="list" gap="8"></ui-icon><ui-icon name="fit" gap="8"></ui-icon><ui-icon name="find" gap="8"></ui-icon><ui-icon name="picture" gap="8"></ui-icon><ui-icon name="edit" gap="8"></ui-icon><ui-caret gap="3"></ui-caret><ui-icon name="zoomout" gap="120"></ui-icon><zoom-slider></zoom-slider></tool-bar>
    <div class="tracks">
    <track-row h="71" name="Cytoband" cw="66" line="20"><cytoband-plot></cytoband-plot></track-row>
    <track-row h="40" name="Scale" cw="35"><scale-plot></scale-plot></track-row>
    <track-row h="22" name="Range" cw="42"><range-plot></range-plot></track-row>
    <track-row h="12"></track-row>
    <track-row h="80" name="Gene" cw="35"><gene-plot></gene-plot></track-row>
    <track-row h="112" name="Transcript" cw="70"><transcript-plot></transcript-plot><svg class="more" width="13" height="13"><rect x=".5" y=".5" width="12" height="12" rx="1" fill="#fff" stroke="#b4cdee"/><path d="M6.500 3v7M3 6.500h7" stroke="#4579c4"/></svg></track-row>
    <track-row h="6"></track-row>
    <div class="rest"></div>
    </div></div>`);
  }
}
define('genome-app',GenomeApp);
</script>
</body>
</html>
